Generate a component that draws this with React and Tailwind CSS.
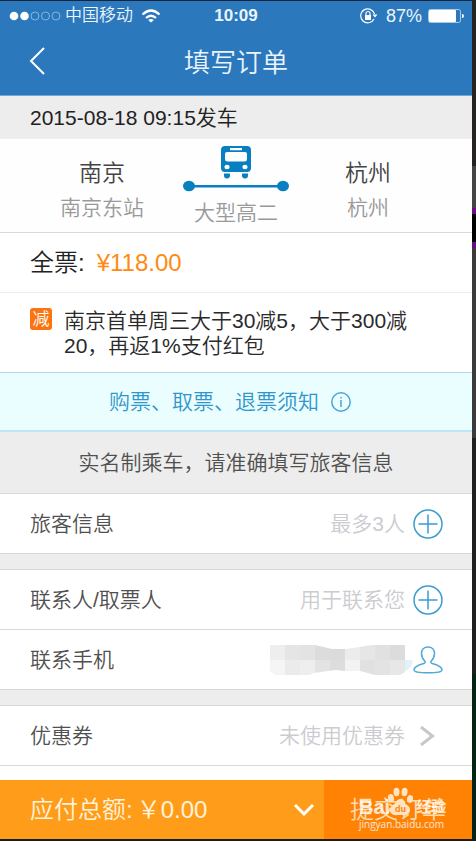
import React from "react";

const BusIcon = () => (
    <svg viewBox="0 0 30 34" className="w-[30px] h-[34px]" aria-hidden="true">
        <path
            fill="#087fc0"
            fillRule="evenodd"
            d="M4 0h22a4 4 0 0 1 4 4v18a4 4 0 0 1-4 4H4a4 4 0 0 1-4-4V4a4 4 0 0 1 4-4zM9 2v2.200h12V2zM6 6Q4 6 4 8v5q0 2.500 2.500 2.500h17Q26 15.500 26 13V8q0-2-2-2z"
        />
        <ellipse cx="6" cy="21" rx="2.6" ry="2.2" fill="#fff" />
        <ellipse cx="24" cy="21" rx="2.6" ry="2.2" fill="#fff" />
        <path d="M3 27.500h6v2a3 3 0 0 1-6 0zM21 27.500h6v2a3 3 0 0 1-6 0z" fill="#087fc0" />
    </svg>
);

const PlusIcon = () => (
    <svg viewBox="0 0 30 30" className="w-[30px] h-[30px]" fill="none" stroke="#3a9dd2" strokeWidth="1.5" aria-hidden="true">
        <circle cx="15" cy="15" r="14" />
        <path d="M5.500 15h19M15 5.500v19" />
    </svg>
);

const PersonIcon = () => (
    <svg viewBox="0 0 30 28" className="w-[30px] h-[28px]" fill="none" stroke="#4fa8d8" strokeWidth="1.5" aria-hidden="true">
        <path d="M15 1c-4 0-6.500 2.800-6.500 6.500 0 3 1.200 5.500 3.200 7.500 1 1.200.5 2-1 2.500C5 19 1 20.500 1 24c0 2 5 2.800 14 2.800S29 26 29 24c0-3.500-4-5-9.700-6.500-1.500-.5-2-1.300-1-2.500 2-2 3.200-4.500 3.200-7.500C21.500 3.800 19 1 15 1z" />
    </svg>
);

const ChevronRight = () => (
    <svg viewBox="0 0 16 20" className="w-4 h-5" fill="none" stroke="#c7c7cb" strokeWidth="3" aria-hidden="true">
        <path d="M2 1l11.500 9L2 19" />
    </svg>
);

// blurred-out phone number, 15px blocks
const topCells = ["#eeeeee", "#e5e5e5", "#e3e3e3", "#dcdcdc", "#dbdbdb", "#ececec", "#e6e6e6", "#e1e1e1", "#dcdcdc"];
const bottomCells = ["#f5f5f5", "#ebebeb", "#eeeeee", "#e3e3e3", "#dddddd", "#f3f3f3", "#e1e1e1", "#e3e3e3", "#e7e7e7"];

const HiddenPhone = () => (
    <svg viewBox="0 0 143 30" className="w-[143px] h-[30px]" role="img">
        <clipPath id="phoneShape">
            <path d="M0 0h45l17 4h14L102 0h33v27l-5 3h-25l-15-4H75l-10-1-21 3-5 2H5l-5-4z" />
        </clipPath>
        <path d="M135 15h8q-1 9-8 11z" fill="#e4f1f7" />
        <g clipPath="url(#phoneShape)" shapeRendering="crispEdges">
            {topCells.map((color, idx) => (
                <rect key={idx} x={idx * 15} y="0" width="15" height="15" fill={color} />
            ))}
            {bottomCells.map((color, idx) => (
                <rect key={idx} x={idx * 15} y="15" width="15" height="15" fill={color} />
            ))}
        </g>
    </svg>
);

const StatusBar = () => (
    <div className="grid grid-cols-[1fr_auto_1fr] items-center h-[30px] px-2 text-[17px]">
        <div className="flex items-center gap-1 pl-[1px]">
            <svg viewBox="0 0 52 10" className="w-[52px] h-[10px]" aria-hidden="true">
                <circle cx="5" cy="5" r="4.300" fill="#fff" />
                <circle cx="15.500" cy="5" r="4.300" fill="#fff" />
                <g fill="none" stroke="#84b5de">
                    <circle cx="26" cy="5" r="4" />
                    <circle cx="36.500" cy="5" r="4" />
                    <circle cx="47" cy="5" r="4" />
                </g>
            </svg>
            <span>中国移动</span>
            <svg viewBox="0 0 20 15" className="w-5 h-[15px] ml-1" fill="none" stroke="#fff" strokeWidth="2.200" aria-hidden="true">
                <path d="M1.500 5.500Q10-2.500 18.500 5.500M5 9Q10 4.500 15 9" />
                <path d="M10 13.500L7.200 11Q10 8.800 12.800 11z" fill="#fff" stroke="none" />
            </svg>
        </div>
        <span className="text-[17px] font-bold">10:09</span>
        <div className="flex items-center justify-end">
            <svg viewBox="0 0 18 16" className="w-[18px] h-4 mr-2" fill="none" stroke="#fff" aria-hidden="true">
                <path d="M14.500 6A7 7 0 1 0 14 11" strokeWidth="1.200" />
                <path d="M12.500 6.500h5L15 9.500z" fill="#fff" stroke="none" />
                <rect x="5" y="7" width="6" height="5" fill="#fff" stroke="none" />
                <path d="M6 7.500V5.500a2 2 0 0 1 4 0v2" strokeWidth="1.200" />
            </svg>
            <span className="text-[18px]">87%</span>
            <svg viewBox="0 0 36 14" className="w-9 h-[14px] ml-[6px]" aria-hidden="true">
                <rect x=".5" y=".5" width="32" height="13" rx="2" fill="none" stroke="#a9cbe8" />
                <rect x="1" y="1" width="27" height="12" rx="1" fill="#fff" />
                <path d="M34 5q2 0 2 2t-2 2z" fill="#fff" />
            </svg>
        </div>
    </div>
);

const Station = ({ city, station }) => (
    <div className="flex flex-col items-center pt-4">
        <span className="text-[23px] leading-9 text-[#444]">{city}</span>
        <span className="leading-[34px] text-[#999]">{station}</span>
    </div>
);

const Row = ({ id, label, placeholder, children }) => (
    <div className="flex items-center h-[60px] pl-[30px] pr-[29px] bg-white border-b border-[#d9d9d9]">
        <label htmlFor={id} className="shrink-0 text-[#505050]">{label}</label>
        <input
            id={id}
            placeholder={placeholder}
            className="flex-1 min-w-0 pr-2 text-right bg-transparent outline-none placeholder:text-[#cbcbd0]"
        />
        {children}
    </div>
);

const Watermark = () => (
    <div className="absolute left-[35px] top-[7px] text-white/80 pointer-events-none">
        <svg viewBox="0 0 26 29" className="absolute left-7 top-0 w-[26px] h-[29px]" fill="#ffe4c4" aria-hidden="true">
            <ellipse cx="4" cy="11" rx="3" ry="4" transform="rotate(-15 4 11)" />
            <ellipse cx="9.500" cy="5" rx="3" ry="4.200" />
            <ellipse cx="17.500" cy="5" rx="3" ry="4.200" transform="rotate(8 17.500 5)" />
            <ellipse cx="23" cy="12" rx="3" ry="4" transform="rotate(15 23 12)" />
            <path d="M13 12c-3 0-4 4-7 6s-4 5-2 8 6 2 9 2 7 1 9-2 1-6-2-8-4-6-7-6z" />
        </svg>
        <span className="absolute left-9 top-4 text-[9px] leading-3 font-bold text-[#ff8205]">du</span>
        <div className="flex items-end pt-2 leading-6">
            <span className="text-[20px] font-bold">Bai</span>
            <span className="pl-[26px] text-[15px] font-bold">经验</span>
        </div>
        <div className="font-['Open_Sans','Noto_Sans',sans-serif] text-[10px] leading-[10px] font-medium">jingyan.baidu.com</div>
    </div>
);

const App = () => {
    return (
        <div className="flex bg-[#1b1b1b] border-t border-[#16243c] pb-[2px] font-['Liberation_Sans','Noto_Sans_CJK_SC',sans-serif] text-[21px] font-[350]">
            <main className="flex-1 min-w-0 bg-[#ededed]">
                <header className="bg-[#2b79bc] border-b border-[#74a8d5] text-[#eaf4fd]">
                    <StatusBar />
                    <div className="grid grid-cols-[1fr_auto_1fr] items-center h-16 pb-1">
                        <button type="button" aria-label="返回" className="justify-self-start pl-[29px]">
                            <svg viewBox="0 0 16 28" className="w-4 h-7" fill="none" stroke="#fff" strokeWidth="2">
                                <path d="M15 1L2 14l13 13" />
                            </svg>
                        </button>
                        <h1 className="pt-1 text-[26px] leading-9 font-[350]">填写订单</h1>
                    </div>
                </header>

                <p className="h-[43px] pl-[30px] leading-[43px] text-[#222]">2015-08-18 09:15发车</p>

                <section className="grid grid-cols-[1fr_112px_1fr] h-[94px] pl-6 pr-6 bg-[#fefefe] border-b border-[#d9dadb]">
                    <Station city="南京" station="南京东站" />
                    <div className="flex flex-col items-center pt-[7px]">
                        <BusIcon />
                        <svg viewBox="0 0 106 12" className="w-[106px] h-3" fill="#087fc0" aria-hidden="true">
                            <path d="M6 5h94v2.500H6z" />
                            <ellipse cx="6" cy="6" rx="6" ry="5.200" />
                            <ellipse cx="100" cy="6" rx="6" ry="5.200" />
                        </svg>
                        <span className="pt-1 leading-[34px] text-[#999]">大型高二</span>
                    </div>
                    <div className="pr-1">
                        <Station city="杭州" station="杭州" />
                    </div>
                </section>

                <section className="flex items-center h-[60px] pl-[30px] bg-white border-b border-[#ececec] text-[24px]">
                    <span className="text-[#222]">全票:</span>
                    <span className="pl-3 text-[#ff8a10]">¥118.00</span>
                </section>

                <section className="flex items-start h-20 pt-[15px] pl-[30px] pr-14 bg-white border-b border-[#b9d6ea]">
                    <span className="grid place-items-center shrink-0 w-[22px] h-[22px] mr-3 rounded-[3px] bg-[#fc7410] text-[17px] leading-none text-white">
                        减
                    </span>
                    <p className="leading-[25px] text-[#2a2a2a]">南京首单周三大于30减5，大于300减20，再返1%支付红包</p>
                </section>

                <a
                    href="#notice"
                    className="flex items-center justify-center h-[59px] pr-3 bg-[#ebfeff] border-b-2 border-[#bfe6f7] text-[#2f96cb]"
                >
                    购票、取票、退票须知
                    <svg viewBox="0 0 20 20" className="w-5 h-5 ml-3" fill="none" stroke="#4ba5d6" strokeWidth="1.500" aria-hidden="true">
                        <circle cx="10" cy="10" r="9.200" />
                        <path d="M10 8v7M10 5v1.500" />
                    </svg>
                </a>

                <p className="h-[62px] leading-[62px] text-center text-[#505050] border-b border-[#d9d9d9]">
                    实名制乘车，请准确填写旅客信息
                </p>

                <form>
                    <Row id="passenger" label="旅客信息" placeholder="最多3人">
                        <button type="button" aria-label="添加旅客"><PlusIcon /></button>
                    </Row>
                    <div className="mt-[15px] border-t border-[#d9d9d9]">
                        <Row id="contact" label="联系人/取票人" placeholder="用于联系您">
                            <button type="button" aria-label="添加联系人"><PlusIcon /></button>
                        </Row>
                        <Row id="phone" label="联系手机">
                            <HiddenPhone />
                            <button type="button" aria-label="通讯录"><PersonIcon /></button>
                        </Row>
                    </div>
                    <div className="mt-[15px] border-t border-[#d9d9d9]">
                        <Row id="coupon" label="优惠券" placeholder="未使用优惠券">
                            <button type="button" aria-label="选择优惠券" className="w-[30px] pl-[6px]"><ChevronRight /></button>
                        </Row>
                    </div>
                </form>
                <div className="h-[14px] bg-white" />

                <footer className="flex h-[59px] text-[#fff3dc]">
                    <div className="flex flex-1 items-center pl-[30px] pr-[10px] bg-[#ff9d1b] text-[24px]">
                        <span>应付总额:</span>
                        <span className="flex-1 pl-1">￥0.00</span>
                        <button type="button" aria-label="明细">
                            <svg viewBox="0 0 20 12" className="w-5 h-3" fill="none" stroke="#fff" strokeWidth="3">
                                <path d="M1 1l9 9 9-9" />
                            </svg>
                        </button>
                    </div>
                    <div className="relative w-[148px] bg-[#ff8205]">
                        <button type="button" className="w-full h-full text-[24px] text-[#ffdcae]">提交订单</button>
                        <Watermark />
                    </div>
                </footer>
            </main>

            {/* edge of the backdrop on the right */}
            <div className="flex flex-col w-1">
                <div className="h-[165px] bg-[#262420]" />
                <div className="h-[42px] bg-[#454545]" />
                <div className="h-10 bg-black border-y-[6px] border-[#6d0a86]" />
                <div className="h-[190px] bg-[#3b3b3b]" />
                <div className="h-[236px] bg-[#202020]" />
                <div className="flex-1 bg-[#062414]" />
            </div>
        </div>
    );
};

export default App;
